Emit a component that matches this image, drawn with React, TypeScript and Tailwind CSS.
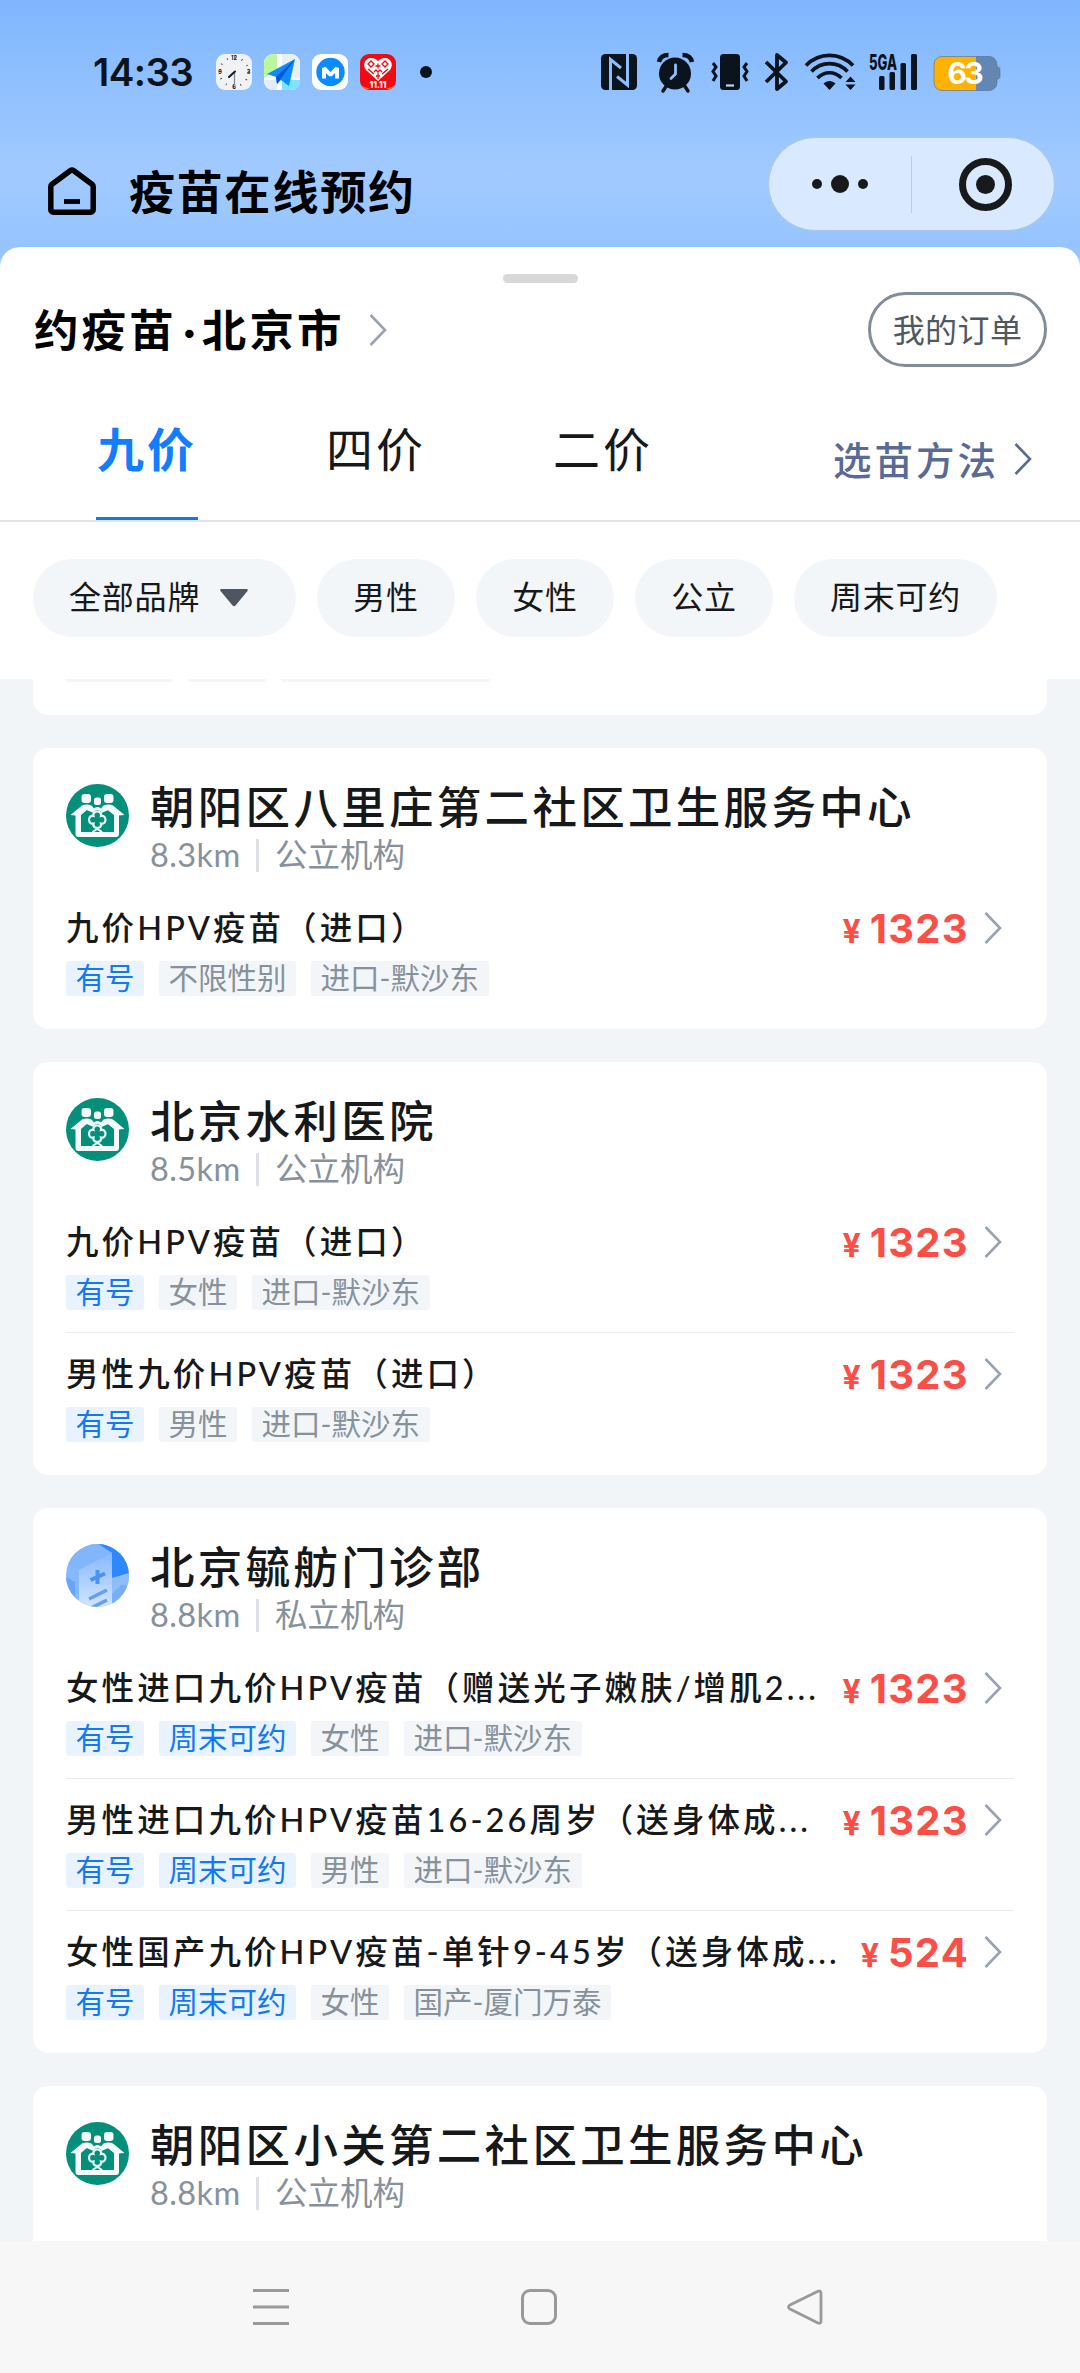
import clsx from "clsx";

type Tag = { label: string; active?: boolean };
type Vaccine = { title: string; price: string; tags: Tag[] };
type Clinic = {
  name: string;
  distance: string;
  kind: string;
  logo: "public" | "private";
  vaccines: Vaccine[];
};

const available: Tag = { label: "有号", active: true };
const weekend: Tag = { label: "周末可约", active: true };

const clinics: Clinic[] = [
  {
    name: "朝阳区八里庄第二社区卫生服务中心",
    distance: "8.3km",
    kind: "公立机构",
    logo: "public",
    vaccines: [
      {
        title: "九价HPV疫苗（进口）",
        price: "1323",
        tags: [available, { label: "不限性别" }, { label: "进口-默沙东" }],
      },
    ],
  },
  {
    name: "北京水利医院",
    distance: "8.5km",
    kind: "公立机构",
    logo: "public",
    vaccines: [
      {
        title: "九价HPV疫苗（进口）",
        price: "1323",
        tags: [available, { label: "女性" }, { label: "进口-默沙东" }],
      },
      {
        title: "男性九价HPV疫苗（进口）",
        price: "1323",
        tags: [available, { label: "男性" }, { label: "进口-默沙东" }],
      },
    ],
  },
  {
    name: "北京毓舫门诊部",
    distance: "8.8km",
    kind: "私立机构",
    logo: "private",
    vaccines: [
      {
        title: "女性进口九价HPV疫苗（赠送光子嫩肤/增肌2...",
        price: "1323",
        tags: [available, weekend, { label: "女性" }, { label: "进口-默沙东" }],
      },
      {
        title: "男性进口九价HPV疫苗16-26周岁（送身体成...",
        price: "1323",
        tags: [available, weekend, { label: "男性" }, { label: "进口-默沙东" }],
      },
      {
        title: "女性国产九价HPV疫苗-单针9-45岁（送身体成...",
        price: "524",
        tags: [available, weekend, { label: "女性" }, { label: "国产-厦门万泰" }],
      },
    ],
  },
  {
    name: "朝阳区小关第二社区卫生服务中心",
    distance: "8.8km",
    kind: "公立机构",
    logo: "public",
    vaccines: [],
  },
];

function Chevron({ className }: { className?: string }) {
  return (
    <svg
      viewBox="0 0 18 32"
      className={clsx("h-8 w-[18px] shrink-0", className)}
      fill="none"
      stroke="currentColor"
      strokeWidth="2.6"
    >
      <path d="M1.5 1 16 16 1.5 31" />
    </svg>
  );
}

function AppIcons() {
  return (
    <div className="ml-[25px] flex gap-3">
      <svg viewBox="0 0 36 36" className="size-9">
        <rect width="36" height="36" rx="9" fill="#f1f2f4" />
        <circle
          cx="18"
          cy="18"
          r="14.5"
          fill="none"
          stroke="#333"
          strokeWidth="2"
          strokeDasharray="0.8 6.79"
        />
        <g fontFamily="Inter" fontWeight="700" fontSize="5.5" fill="#111" textAnchor="middle">
          <text x="18" y="6">12</text>
          <text x="32.5" y="20">3</text>
          <text x="18" y="35">6</text>
          <text x="4" y="20">9</text>
        </g>
        <path d="M18.5 18v13" stroke="#7b8796" strokeWidth="1.2" />
        <path d="m19 17.5-6 5.5" stroke="#111c28" strokeWidth="2" strokeLinecap="round" />
      </svg>
      <svg viewBox="0 0 36 36" className="size-9">
        <clipPath id="map">
          <rect width="36" height="36" rx="9" />
        </clipPath>
        <g clipPath="url(#map)">
          <rect width="36" height="36" fill="#fff" />
          <path d="M0 0h13v16L0 24z" fill="#bdf79b" />
          <path d="M18 0h18v24H18z" fill="#e8f1f2" />
          <path d="M18 26h18v10H18z" fill="#7de3ff" />
          <path d="M0 26h13v10H0z" fill="#e4edf5" />
          <path d="M31 5 3 20l9 3 1 7 4-4 8 6z" fill="#0f8bff" />
          <path d="M31 5 12 23l1 7z" fill="#0455d8" />
        </g>
      </svg>
      <svg viewBox="0 0 36 36" className="size-9">
        <rect width="36" height="36" rx="9" fill="#fff" />
        <circle cx="18.5" cy="18" r="14.2" fill="#098cff" />
        <path
          d="M12 24.5V14l6.5 7 6.5-7v10.5"
          fill="none"
          stroke="#fff"
          strokeWidth="4"
          strokeLinejoin="bevel"
        />
      </svg>
      <svg viewBox="0 0 36 36" className="size-9">
        <rect width="36" height="36" rx="9" fill="#f00a12" />
        <path d="M1 31c3 3 6 2 9 4H7c-3 0-5-2-6-4zM35 31c-3 3-6 2-9 4h3c3 0 5-2 6-4z" fill="#ff7130" />
        <path
          d="M18 27 6 16c-4-5-1-12 5-12 3 0 5 1 7 3 2-2 4-3 7-3 6 0 9 7 5 12z"
          fill="#fff"
        />
        <path
          d="m11 7 3 3-3 3-3-3zM25 7l3 3-3 3-3-3zM15.500 12h5M18 9.500v5M14 18l2-2 2 2 2-2 2 2M8 15l6 5M28 15l-6 5M16 22h4M18 19v6"
          fill="none"
          stroke="#f00a12"
          strokeWidth="1.300"
        />
        <text
          x="18"
          y="34"
          fontFamily="Inter"
          fontWeight="800"
          fontSize="8.5"
          fill="#fff"
          textAnchor="middle"
          textLength="17"
          lengthAdjust="spacingAndGlyphs"
        >
          11.11
        </text>
      </svg>
    </div>
  );
}

const batteryShape =
  "M342 5.500h47a8 8 0 0 1 8 8V16c2.500 0 3 1 3 3v6c0 2-.5 3-3 3v3.500a8 8 0 0 1-8 8h-47a8 8 0 0 1-8-8v-18a8 8 0 0 1 8-8z";

function StatusIcons() {
  return (
    <svg
      viewBox="0 0 402 42"
      className="h-[42px] w-[402px] overflow-visible text-[#0b131c]"
      fill="currentColor"
    >
      {/* nfc */}
      <rect x="1" y="3" width="36" height="36" rx="4.5" />
      <path d="M10.500 39V8.500L21 17M27.500 3v31L17 25.500" fill="none" stroke="#8cbeff" strokeWidth="3" />
      {/* alarm */}
      <circle cx="75" cy="22.5" r="16" />
      <path
        d="M59 11c1-5 4.500-7 9.500-7M92 11c-1-5-4.500-7-9.500-7"
        stroke="currentColor"
        strokeWidth="4.500"
        fill="none"
      />
      <path d="m67 34-4 6M84 34l4 6" stroke="currentColor" strokeWidth="3.500" strokeLinecap="round" />
      <path d="M75.500 14v9l-4.500 4.500" stroke="#90c1ff" strokeWidth="2.800" strokeLinecap="round" fill="none" />
      {/* vibrate */}
      <rect x="120" y="3" width="20" height="36" rx="3.5" />
      <path d="M126 34.500h8" stroke="#b5d6ff" strokeWidth="2.200" />
      <path
        d="m113 12 3 4-3 4.500 3 4.500-3 5M147 12l-3 4 3 4.500-3 4.500 3 5"
        fill="none"
        stroke="currentColor"
        strokeWidth="3"
      />
      {/* bluetooth */}
      <path
        d="m166 11 20 19.500L177 38V4l9 7.500L166 31"
        fill="none"
        stroke="currentColor"
        strokeWidth="3.800"
        strokeLinejoin="round"
      />
      {/* wifi */}
      <path
        d="M206 14.500c13-13.500 34-13.500 47 0M211.500 20.500c10-10.500 26-10.500 36 0M217.500 27c7-7 17-7 24 0"
        fill="none"
        stroke="currentColor"
        strokeWidth="3.700"
      />
      <path d="m229.500 39-6-6.500c3.500-3.500 8.500-3.500 12 0z" />
      <path d="m245.500 31 5-5.500 5 5.500zM245.500 33.500h10l-5 5.500z" />
      {/* signal */}
      <text
        x="269"
        y="18.5"
        fontFamily="Inter"
        fontWeight="800"
        fontSize="21.5"
        textLength="28"
        lengthAdjust="spacingAndGlyphs"
      >
        5GA
      </text>
      <rect x="279" y="25" width="5.5" height="14" rx="1.5" />
      <rect x="289.5" y="21" width="5.5" height="18" rx="1.5" />
      <rect x="300.5" y="12" width="5.5" height="27" rx="1.5" />
      <rect x="311" y="3" width="6" height="36" rx="1.5" />
      {/* battery */}
      <clipPath id="battery">
        <path d={batteryShape} />
      </clipPath>
      <g clipPath="url(#battery)">
        <rect x="333" y="4" width="43" height="38" fill="#ffb300" />
        <rect x="376" y="4" width="26" height="38" fill="#6486b3" />
      </g>
      <path d={batteryShape} fill="none" stroke="#4f6d94" strokeOpacity=".6" />
      <text
        x="365.5"
        y="33"
        fontFamily="Inter"
        fontWeight="700"
        fontSize="30"
        fill="#fff"
        textAnchor="middle"
        textLength="36"
      >
        63
      </text>
    </svg>
  );
}

function PublicLogo() {
  return (
    <svg viewBox="0 0 63 63" className="size-[63px] shrink-0">
      <circle cx="31.5" cy="31.5" r="31.5" fill="#048f7b" />
      <g fill="#f4fbfa">
        <rect x="15.5" y="10" width="9.5" height="9" rx="3" />
        <rect x="28" y="13.5" width="7" height="7.5" rx="2.5" />
        <rect x="38" y="10" width="9.5" height="9" rx="3" />
        <path d="M4.500 31 16 21.500c3-1.500 7-1.500 10 .5l2 2.500c2-2 5-2 7 0l2-2.500c3-2 7-2 10-.5L58.500 31l-5.500.5V50a3 3 0 0 1-3 3H12.500a3 3 0 0 1-3-3V31.500z" />
      </g>
      <path d="M15 31 22 25l5 2.500 4.300-1.500 4.200 1.500 5-2.500 7.500 6v17H15z" fill="#048f7b" />
      <path
        d="m21 25 7 3M42 25l-7 3M26.500 48l4.800-3 4.800 3"
        stroke="#f4fbfa"
        strokeWidth="2"
        fill="none"
      />
      <path
        d="M27.500 32c-1.500-6 9-6 7.500 0 6-1.500 6 9 0 7.500 1.500 6-9 6-7.500 0-6 1.500-6-9 0-7.500z"
        fill="#048f7b"
        stroke="#e8f7f4"
        strokeWidth="2.200"
      />
    </svg>
  );
}

function PrivateLogo() {
  return (
    <svg viewBox="0 0 63 63" className="size-[63px] shrink-0">
      <defs>
        <linearGradient id="front" x1="0" y1="0" x2="0" y2="1">
          <stop offset="0" stopColor="#86b9fd" />
          <stop offset="1" stopColor="#d3e5ff" />
        </linearGradient>
        <clipPath id="round">
          <circle cx="31.5" cy="31.5" r="31.5" />
        </clipPath>
      </defs>
      <g clipPath="url(#round)">
        <rect width="63" height="63" fill="#85b9fd" />
        <path d="M32 0h31v30L46 34V9z" fill="#2c88fe" />
        <path d="M0 0h32l14 9-33 17-13-8z" fill="#82b6fa" />
        <path d="m0 33 9 5v25H0z" fill="#68a5f6" />
        <path d="m46 34 17-5v34H46z" fill="#8fbdfa" />
        <path d="m46 50 10-10 7 3v20H46z" fill="#76aff9" />
        <path d="m13 26 33-17v54H13z" fill="url(#front)" />
        <path d="M31.500 26v14M24.500 36 39 29.500" stroke="#4a93f5" strokeWidth="4" />
        <path d="m23 55 18-9M23 65l18-9" stroke="#659ff0" strokeWidth="3.500" />
      </g>
    </svg>
  );
}

function VaccineRow({ vaccine, divided }: { vaccine: Vaccine; divided: boolean }) {
  return (
    <div className={clsx(divided && "mt-[22px] border-t border-[#e8ecf0] pt-[19px]")}>
      <div className="flex h-11 items-center">
        <p className="flex-1 text-[32.5px] leading-[44px] font-medium tracking-[3.1px] whitespace-nowrap text-[#16181a]">
          {vaccine.title}
        </p>
        <div className="flex items-baseline pt-0.5 font-[Inter,'Noto_Sans_CJK_SC',sans-serif] font-bold text-[#fb4e46]">
          <span className="mr-[9px] text-[32px] leading-none">¥</span>
          <span className="text-[40px] leading-[44px] tracking-[1.3px]">{vaccine.price}</span>
        </div>
        <Chevron className="mr-3 ml-[15px] text-[#98a3b1]" />
      </div>
      <div className="mt-[11px] flex gap-[15px]">
        {vaccine.tags.map((tag) => (
          <span
            key={tag.label}
            className={clsx(
              "h-[35px] rounded-[3px] px-[9.5px] text-[29.5px] leading-[33px] whitespace-nowrap",
              tag.active ? "bg-[#e9f3ff] text-[#1479f0]" : "bg-[#f2f6f9] text-[#87919b]",
            )}
          >
            {tag.label}
          </span>
        ))}
      </div>
    </div>
  );
}

function ClinicCard({ clinic }: { clinic: Clinic }) {
  return (
    <div className="shrink-0 rounded-[15px] bg-white px-[33px] pt-9 pb-[33px]">
      <div className="mb-[34px] flex">
        {clinic.logo === "public" ? <PublicLogo /> : <PrivateLogo />}
        <div className="ml-[21px]">
          <h2 className="h-12 text-[44.5px] leading-[45px] font-medium tracking-[3.3px] whitespace-nowrap text-[#16181a]">
            {clinic.name}
          </h2>
          <div className="mt-[6px] flex h-[34px] items-center text-[32.5px] leading-[34px] text-[#87919b]">
            <span className="w-[90px] tracking-[0.4px]">{clinic.distance}</span>
            <span className="mr-4 ml-4 h-[33px] w-[3px] bg-[#dee2e6]" />
            <span>{clinic.kind}</span>
          </div>
        </div>
      </div>
      {clinic.vaccines.map((vaccine, i) => (
        <VaccineRow key={vaccine.title} vaccine={vaccine} divided={i > 0} />
      ))}
    </div>
  );
}

export default function App() {
  return (
    <div className="flex h-[2373px] w-[1080px] flex-col overflow-hidden bg-[linear-gradient(180deg,#80b6ff_0px,#8cbeff_65px,#a1caff_175px,#96c4ff_247px,#a0caff_270px)] font-[Lato,'Noto_Sans_CJK_SC',sans-serif]">
      <header className="h-[247px] shrink-0">
        <div className="mt-[51px] flex h-[42px] items-center pl-[93px]">
          <span className="w-[98px] font-[Inter] text-[38.5px] leading-none font-semibold tracking-[-0.6px] text-[#0b131c]">
            14:33
          </span>
          <AppIcons />
          <span className="ml-6 size-3 rounded-full bg-[#0b131c]" />
          <div className="ml-[168px]">
            <StatusIcons />
          </div>
        </div>
        <div className="mt-11 flex h-[94px] items-center pr-[25px] pl-12">
          <svg viewBox="0 0 48 48" className="mt-[14px] h-12 w-12" fill="none" stroke="#000" strokeWidth="5.5">
            <path
              d="M2.800 19.500v23c0 1.500 1 2.700 2.700 2.700h37c1.700 0 2.700-1.200 2.700-2.700v-23c0-1-.4-1.700-1.200-2.300L25.500 3.500c-1-.7-2-.7-3 0L4 17.200c-.8.6-1.200 1.300-1.200 2.300z"
              strokeLinejoin="round"
            />
            <path d="M16 34.500h16" strokeWidth="4.8" />
          </svg>
          <h1 className="mt-4 ml-[33px] text-[46px] leading-[60px] font-bold tracking-[1.8px] whitespace-nowrap text-black">
            疫苗在线预约
          </h1>
          <div className="ml-auto flex h-[94px] w-[287px] items-center rounded-full border border-[#a9c6e8] bg-[#d9e9ff]">
            <div className="flex w-[142px] items-center justify-center gap-[9px] text-[#17191a]">
              <span className="size-[10px] rounded-full bg-current" />
              <span className="size-[18px] rounded-full bg-current" />
              <span className="size-[10px] rounded-full bg-current" />
            </div>
            <span className="h-[57px] w-px bg-[#b8cde8]" />
            <div className="flex flex-1 justify-center pl-1">
              <div className="flex size-[53px] items-center justify-center rounded-full border-[7px] border-[#17191a]">
                <span className="size-[19px] rounded-full bg-[#17191a]" />
              </div>
            </div>
          </div>
        </div>
      </header>

      <section className="h-[432px] shrink-0 rounded-t-[20px] bg-white">
        <div className="mx-auto mt-[27px] h-[9px] w-[75px] rounded-full bg-[#d8d8d8]" />
        <div className="mt-[9px] flex h-[75px] items-center pr-[33px] pl-[34px]">
          <h2 className="text-[44.5px] leading-[60px] font-bold tracking-[3.1px] whitespace-nowrap text-black">
            约疫苗
            <span className="inline-block w-[25px] text-center tracking-normal">·</span>
            北京市
          </h2>
          <Chevron className="ml-6 text-[#98a3b1]" />
          <button className="ml-auto h-[75px] w-[179px] rounded-full border-[3px] border-[#838d97] text-center text-[32px] leading-[65px] tracking-[0.4px] text-[#4f5862]">
            我的订单
          </button>
        </div>
        <div className="flex h-[155px] items-stretch border-b-2 border-[#e0e5ea] pl-24 text-[47px] tracking-[3px] text-[#16181a]">
          <div className="w-[102px] border-b-[3px] border-[#1479e6] pt-[52px] text-center leading-[60px] font-bold text-[#137dff]">
            九价
          </div>
          <div className="ml-[127px] w-[102px] pt-[52px] text-center leading-[60px]">四价</div>
          <div className="ml-[125px] w-[102px] pt-[52px] text-center leading-[60px]">二价</div>
          <div className="ml-auto flex pt-[66px] pr-12 text-[#576b95]">
            <span className="text-[38.5px] leading-[54px] font-medium tracking-[3px]">选苗方法</span>
            <Chevron className="mt-[10px] ml-[15px]" />
          </div>
        </div>
        <div className="flex gap-[21px] px-[33px] pt-[37px] text-[32px] leading-[75px] tracking-[0.8px] text-[#16181a]">
          <div className="flex h-[78px] w-[263px] rounded-full bg-[#f2f6f9] pl-9">
            <span>全部品牌</span>
            <svg viewBox="0 0 28 18" className="mt-[30px] ml-5 h-[18px] w-7" fill="#4d5661">
              <path d="M1.500 0h25c1.200 0 1.700 1 1 2L15.500 16.500c-.8 1-2 1-2.900 0L.500 2c-.8-1-.3-2 1-2z" />
            </svg>
          </div>
          <div className="h-[78px] w-[138px] rounded-full bg-[#f2f6f9] text-center">男性</div>
          <div className="h-[78px] w-[138px] rounded-full bg-[#f2f6f9] text-center">女性</div>
          <div className="h-[78px] w-[138px] rounded-full bg-[#f2f6f9] text-center">公立</div>
          <div className="h-[78px] w-[203px] rounded-full bg-[#f2f6f9] text-center">周末可约</div>
        </div>
      </section>

      <main className="flex min-h-0 flex-1 flex-col gap-[33px] overflow-hidden bg-[#f1f5f8] px-[33px]">
        {/* tail of the card scrolled under the filters */}
        <div className="flex h-9 shrink-0 gap-[15px] rounded-b-[15px] bg-white px-[33px]">
          <span className="h-[3px] w-[107px] rounded-b-[3px] bg-[#f2f6f9]" />
          <span className="h-[3px] w-[78px] rounded-b-[3px] bg-[#f2f6f9]" />
          <span className="h-[3px] w-[209px] rounded-b-[3px] bg-[#f2f6f9]" />
        </div>
        {clinics.map((clinic) => (
          <ClinicCard key={clinic.name} clinic={clinic} />
        ))}
      </main>

      <nav className="flex h-[132px] shrink-0 bg-[#f7f7f7] pt-12 pl-[253px] text-[#999]">
        <svg viewBox="0 0 36 36" className="size-9" stroke="currentColor" strokeWidth="3">
          <path d="M0 1.500h36M0 18h36M0 34.500h36" />
        </svg>
        <svg viewBox="0 0 36 36" className="ml-[232px] size-9" fill="none" stroke="currentColor" strokeWidth="3">
          <rect x="1.5" y="1.5" width="33" height="33" rx="7.5" />
        </svg>
        <svg
          viewBox="0 0 36 36"
          className="ml-[230px] size-9"
          fill="none"
          stroke="currentColor"
          strokeWidth="2.8"
          strokeLinejoin="round"
        >
          <path d="M31 2.300 3 16c-2 1-2 3 0 4l28 14c1.600.8 3 0 3-1.600V3.800c0-1.500-1.400-2.300-3-1.500z" />
        </svg>
      </nav>
    </div>
  );
}
